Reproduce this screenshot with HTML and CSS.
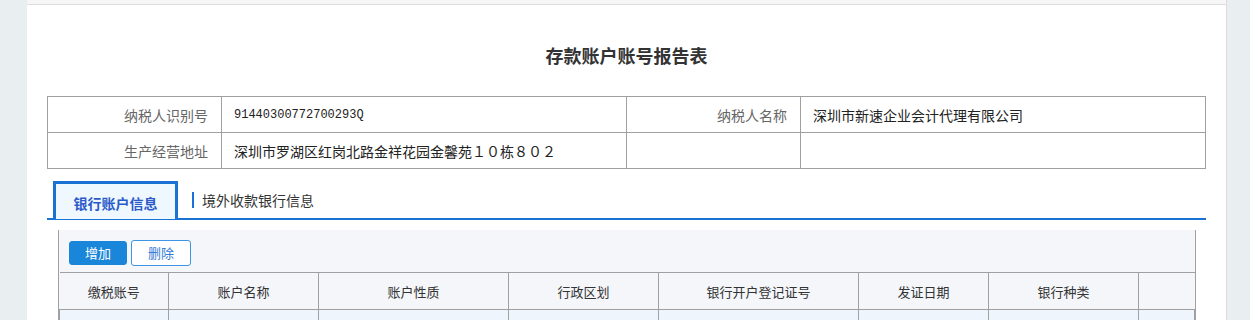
FILE: index.html
```html
<!DOCTYPE html>
<html lang="zh-CN">
<head>
    <meta charset="UTF-8">
    <title>存款账户账号报告表</title>
    <link rel="stylesheet" href="styles.css">
</head>
<body>
    <div class="page">
        <div class="top-strip"></div>
        <h1 class="title">存款账户账号报告表</h1>

        <table class="info-table">
            <colgroup>
                <col class="c-label"><col class="c-value"><col class="c-label"><col class="c-value">
            </colgroup>
            <tr>
                <td class="label">纳税人识别号</td>
                <td class="value mono">91440300772700293Q</td>
                <td class="label">纳税人名称</td>
                <td class="value">深圳市新速企业会计代理有限公司</td>
            </tr>
            <tr>
                <td class="label">生产经营地址</td>
                <td class="value">深圳市罗湖区红岗北路金祥花园金馨苑１０栋８０２</td>
                <td class="label"></td>
                <td class="value"></td>
            </tr>
        </table>

        <div class="tabs">
            <div class="tab active">银行账户信息</div>
            <div class="tab">境外收款银行信息</div>
        </div>

        <div class="grid-panel">
            <div class="toolbar">
                <button class="btn btn-primary">增加</button>
                <button class="btn btn-plain">删除</button>
            </div>
            <table class="grid">
                <colgroup>
                    <col class="w110"><col class="w150"><col class="w190"><col class="w150">
                    <col class="w200"><col class="w130"><col class="w150"><col>
                </colgroup>
                <tr class="head">
                    <th>缴税账号</th>
                    <th>账户名称</th>
                    <th>账户性质</th>
                    <th>行政区划</th>
                    <th>银行开户登记证号</th>
                    <th>发证日期</th>
                    <th>银行种类</th>
                    <th></th>
                </tr>
                <tr class="row">
                    <td></td><td></td><td></td><td></td><td></td><td></td><td></td><td></td>
                </tr>
            </table>
        </div>
    </div>
</body>
</html>
```

FILE: styles.css
```css
html, body {
    margin: 0;
    padding: 0;
}
body {
    background: #e9eef0;
    font-family: "Noto Sans CJK SC", "Noto Sans", sans-serif;
    color: #333;
    height: 320px;
    overflow: hidden;
}
.page {
    margin-left: 27px;
    width: 1199px;
    min-height: 320px;
    background: #fff;
    border-right: 1px solid #dcdcdc;
}
.top-strip {
    height: 4px;
    background: #f6f6f6;
    border-bottom: 1px solid #dedede;
}
.title {
    margin: 0;
    padding-top: 38px;
    height: 91px;
    box-sizing: border-box;
    line-height: 24px;
    font-size: 18px;
    font-weight: bold;
    text-align: center;
    color: #333;
}
.info-table {
    margin: 0 20px;
    width: 1158px;
    border-collapse: collapse;
    table-layout: fixed;
    font-size: 14px;
}
.c-label { width: 174px; }
.c-value { width: 405px; }
.info-table td {
    border: 1px solid #a0a0a0;
    height: 35px;
    padding: 0;
    line-height: 20px;
}
.info-table .label {
    text-align: right;
    color: #666;
    padding-right: 13px;
}
.info-table .value {
    padding-left: 12px;
    color: #222;
}
.info-table .mono {
    font-family: "Liberation Mono", "DejaVu Sans Mono", monospace;
    font-size: 12px;
}
.tabs {
    margin: 12px 20px 0;
    height: 37px;
    border-bottom: 2px solid #1a73d4;
    display: flex;
    align-items: stretch;
}
.tab {
    font-size: 14px;
    color: #333;
    display: flex;
    align-items: center;
}
.tab.active {
    margin-left: 6px;
    width: 125px;
    box-sizing: border-box;
    border: 3px solid #1a73d4;
    border-bottom: none;
    background: #f0f8ff;
    justify-content: center;
    color: #2b5bc9;
    font-weight: bold;
    padding-top: 2px;
    margin-bottom: -1px;
}
.tab + .tab {
    margin-left: 14px;
    padding-left: 8px;
    height: 16px;
    align-self: center;
    border-left: 2px solid #1a73d4;
    margin-top: 1px;
}
.grid-panel {
    margin: 10px 30px 0 31px;
    background: #f4f6fa;
    border-left: 1px solid #a0a0a0;
    border-right: 1px solid #a0a0a0;
}
.toolbar {
    padding: 10px 10px 6px;
    display: flex;
    gap: 4px;
}
.btn {
    font-family: "Noto Sans CJK SC", "Noto Sans", sans-serif;
    font-size: 13px;
    height: 26px;
    width: 58px;
    padding: 0;
    border-radius: 3px;
    line-height: 22px;
    cursor: pointer;
}
.btn-primary {
    background: #1a86d9;
    border: 1px solid #1a86d9;
    color: #fff;
    height: 24px;
    margin-top: 1px;
}
.btn-plain {
    width: 60px;
    background: #fff;
    border: 1px solid #3d95e3;
    color: #3579d6;
}
.grid {
    width: 100%;
    border-collapse: collapse;
    table-layout: fixed;
    font-size: 13px;
}
.w110 { width: 109px; }
.w130 { width: 130px; }
.w150 { width: 150px; }
.w190 { width: 190px; }
.w200 { width: 200px; }
.grid th {
    font-weight: normal;
    color: #333;
    height: 36px;
    padding: 0;
    border: 1px solid #a0a0a0;
}
.grid th:first-child, .grid td:first-child { border-left: none; }
.grid th:last-child, .grid td:last-child { border-right: none; }
.grid .row td {
    height: 30px;
    background: #eef5fd;
    border: 1px solid #a0a0a0;
    border-top: none;
}
```
